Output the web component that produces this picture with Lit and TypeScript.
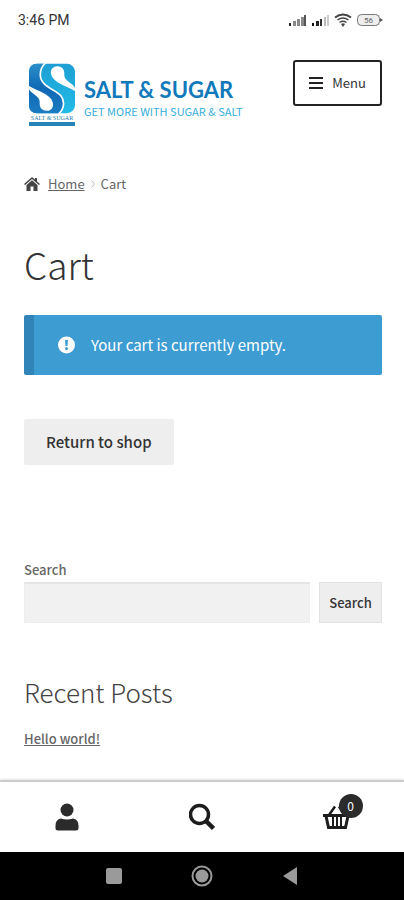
import { LitElement, html, css } from "lit";
import { customElement, property } from "lit/decorators.js";

@customElement("status-bar")
class StatusBar extends LitElement {
  static styles = css`
    :host {
      display: flex;
      justify-content: space-between;
      align-items: center;
      height: 40px;
      padding: 0 21px 0 18px;
      font: 400 14px/16px Roboto, "Liberation Sans", sans-serif;
      color: #333;
    }
    .icons {
      display: block;
    }
    .level {
      font: 8px Roboto, sans-serif;
      fill: #666;
    }
  `;
  render() {
    return html`
      <span>3:46 PM</span>
      <svg class="icons" width="95" height="16" viewBox="0 0 95 16" aria-hidden="true">
        <g fill="#555">
          <rect x="1" y="11" width="2" height="3" fill="#222" />
          <rect x="5" y="9" width="3" height="5" fill="#888" />
          <rect x="9" y="7" width="3" height="7" fill="#888" />
          <rect x="13" y="5" width="3" height="9" fill="#888" />
          <rect x="16" y="3" width="2" height="11" />
          <rect x="24" y="11" width="2" height="3" fill="#111" />
          <rect x="28" y="9" width="3" height="5" fill="#222" />
          <rect x="32" y="7" width="2" height="7" fill="#333" />
          <rect x="36" y="5" width="2" height="9" fill="#bbb" />
          <rect x="39" y="3" width="2" height="11" fill="#ccc" />
        </g>
        <g fill="none" stroke="#444" stroke-width="2">
          <path d="M47 5.5q8-6 16 0" />
          <path d="M49.500 8q5.500-4 11 0" stroke-width="1.500" />
          <path d="M51.500 10.500q3.500-2.500 7 0" stroke-width="1.500" />
        </g>
        <path d="M53 12q2-1.500 4 0l-2 3z" fill="#444" />
        <rect x="69.500" y="2.500" width="22" height="11" rx="4" fill="#eee" stroke="#777" />
        <path d="M92 6l3 2-3 2z" fill="#555" />
        <text class="level" x="80.500" y="11" text-anchor="middle">56</text>
      </svg>
    `;
  }
}

@customElement("site-header")
class SiteHeader extends LitElement {
  static styles = css`
    :host {
      display: flex;
      justify-content: space-between;
      align-items: flex-start;
      padding: 20px 22px 0 28px;
    }
    .logo {
      display: flex;
      gap: 8px;
      text-decoration: none;
      font-family: Lato, "Liberation Sans", sans-serif;
      white-space: nowrap;
    }
    .mark {
      display: flex;
      flex-direction: column;
      width: 48px;
      padding-top: 3px;
    }
    .caption {
      font: 6px/8px "Liberation Serif", serif;
      text-align: center;
      color: #2d7fae;
    }
    .bar {
      height: 4px;
      margin: 0 1px;
      background: #2584b8;
    }
    .words {
      display: flex;
      flex-direction: column;
      padding-top: 18px;
    }
    .name {
      font-size: 22px;
      line-height: 24px;
      font-weight: 700;
      color: #1279bb;
    }
    .tag {
      font: 11px/18px "Noto Sans CJK SC", "Noto Sans", sans-serif;
      color: #35aedb;
    }
    .menu {
      display: flex;
      align-items: center;
      justify-content: center;
      gap: 9px;
      box-sizing: border-box;
      width: 89px;
      height: 46px;
      padding: 0;
      border: 2px solid #222;
      border-radius: 3px;
      background: #fff;
      color: #333;
      font: 13px/20px "Noto Sans CJK SC", "Noto Sans", sans-serif;
    }
  `;
  render() {
    return html`
      <a class="logo" href="#home">
        <span class="mark">
          <svg width="48" height="51" viewBox="0 0 144 152" aria-hidden="true">
            <defs>
              <linearGradient id="deep" x1="0" y1="0" x2="0" y2="1">
                <stop offset="0" stop-color="#2a8fc9" />
                <stop offset="0.5" stop-color="#0f68b4" />
                <stop offset="1" stop-color="#1b7cc2" />
              </linearGradient>
              <linearGradient id="sky" x1="0" y1="0" x2="0" y2="1">
                <stop offset="0" stop-color="#1e9fd4" />
                <stop offset="1" stop-color="#22bce8" />
              </linearGradient>
            </defs>
            <rect x="3" y="2" width="138" height="148" rx="24" fill="url(#sky)" />
            <path
              d="M48 2H27Q3 2 3 26V126Q3 150 27 150H92C108 138 112 114 98 97C80 79 38 68 37 37C36 20 42 9 50 2Z"
              fill="url(#deep)"
            />
            <path
              d="M52 0C42 9 36 20 37 37C38 68 80 79 98 97C112 114 108 138 92 152"
              fill="none" stroke="#fff" stroke-width="5"
            />
            <g fill="#fff">
              <path d="M144 86C128 74 88 64 74 44C62 24 72 9 88 9C104 9 110 20 109 36C109 54 134 58 144 78Z" />
              <path d="M144 86C128 74 88 64 74 44C62 24 72 9 88 9C104 9 110 20 109 36C109 54 134 58 144 78Z" transform="rotate(180 72 76)" />
            </g>
          </svg>
          <span class="caption">SALT &amp; SUGAR</span>
          <span class="bar"></span>
        </span>
        <span class="words">
          <span class="name">SALT &amp; SUGAR</span>
          <span class="tag">GET MORE WITH SUGAR &amp; SALT</span>
        </span>
      </a>
      <button class="menu" type="button">
        <svg width="14" height="12" viewBox="0 0 14 12" aria-hidden="true">
          <path d="M0 1h14M0 6h14M0 11h14" stroke="#222" stroke-width="2" />
        </svg>
        Menu
      </button>
    `;
  }
}

@customElement("cart-page")
class CartPage extends LitElement {
  static styles = css`
    :host {
      display: block;
      padding: 0 22px 0 24px;
      color: #666;
      font: 13px/20px "Noto Sans CJK SC", "Noto Sans", sans-serif;
    }
    .crumbs {
      display: flex;
      align-items: center;
      gap: 6px;
      margin-top: 48px;
    }
    .crumbs a {
      margin-left: 2px;
    }
    a {
      color: inherit;
    }
    h1 {
      margin: 38px 0 0;
      font-size: 37px;
      line-height: 64px;
      font-weight: 300;
      color: #333;
    }
    .notice {
      display: flex;
      align-items: center;
      gap: 16px;
      height: 60px;
      margin-top: 19px;
      padding-left: 24px;
      border-left: 10px solid #3184b7;
      border-radius: 2px;
      background: #3d9cd2;
      color: #fff;
      font-size: 15px;
    }
    .return {
      display: block;
      height: 46px;
      margin-top: 44px;
      padding: 0 22px;
      border: 0;
      border-radius: 2px;
      background: #eee;
      color: #333;
      font: 500 15px/20px "Noto Sans CJK SC", "Noto Sans", sans-serif;
    }
    .search {
      display: grid;
      grid-template-columns: 1fr 63px;
      column-gap: 9px;
      margin-top: 95px;
    }
    label {
      grid-column: 1 / -1;
      padding-bottom: 2px;
      font-weight: 500;
    }
    input {
      min-width: 0;
      height: 41px;
      box-sizing: border-box;
      padding: 0 10px;
      border: 1px solid #eee;
      border-top: 2px solid #e4e4e4;
      background: #f1f1f1;
      font: inherit;
    }
    .go {
      height: 41px;
      box-sizing: border-box;
      padding: 0;
      border: 1px solid #e2e2e2;
      background: #eee;
      color: #333;
      font: inherit;
      font-weight: 500;
    }
    h2 {
      margin: 49px 0 0;
      font-size: 26px;
      line-height: 40px;
      font-weight: 300;
      color: #444;
    }
    .post {
      margin: 17px 0 0;
      font-weight: 500;
    }
  `;
  render() {
    return html`
      <nav class="crumbs" aria-label="Breadcrumb">
        <svg width="16" height="14" viewBox="0 0 16 14" aria-hidden="true">
          <path d="M8 0L0 7l1 1 7-6 7 6 1-1-3-2.600V1h-2v1.600z" fill="#444" />
          <path d="M8 3.200L2.500 8v6H6.500V9.500h3V14h4V8z" fill="#444" />
        </svg>
        <a href="#home">Home</a>
        <svg width="4" height="8" viewBox="0 0 4 8" aria-hidden="true">
          <path d="M0.500 0.500L3.500 4L0.500 7.500" fill="none" stroke="#bbb" />
        </svg>
        <span>Cart</span>
      </nav>
      <h1>Cart</h1>
      <div class="notice" role="status">
        <svg width="17" height="18" viewBox="0 0 17 18" aria-hidden="true">
          <circle cx="8.500" cy="9" r="8.500" fill="#fff" />
          <path d="M7 4h3l-.5 6h-2z" fill="#3d9cd2" />
          <circle cx="8.500" cy="12.500" r="1.500" fill="#3d9cd2" />
        </svg>
        <span>Your cart is currently empty.</span>
      </div>
      <button class="return" type="button">Return to shop</button>
      <form class="search" @submit=${(e: Event) => e.preventDefault()}>
        <label for="query">Search</label>
        <input id="query" type="search" />
        <button class="go" type="submit">Search</button>
      </form>
      <h2>Recent Posts</h2>
      <p class="post"><a href="#hello-world">Hello world!</a></p>
    `;
  }
}

@customElement("shop-bar")
class ShopBar extends LitElement {
  @property({ type: Number }) count = 0;
  static styles = css`
    :host {
      display: grid;
      grid-template-columns: repeat(3, 1fr);
      height: 70px;
      border-top: 2px solid #ccc;
      box-shadow: 0 0 3px #ccc;
      background: #fff;
    }
    a {
      display: flex;
      align-items: center;
      justify-content: center;
    }
    .basket {
      position: relative;
      display: flex;
    }
    .badge {
      position: absolute;
      left: 16px;
      top: -11px;
      width: 24px;
      height: 24px;
      border-radius: 50%;
      background: #2b2b2b;
      color: #fff;
      font: 12px/24px "Noto Sans CJK SC", "Noto Sans", sans-serif;
      text-align: center;
    }
  `;
  render() {
    return html`
      <a href="#account" aria-label="My account">
        <svg width="24" height="28" viewBox="0 0 24 28" aria-hidden="true">
          <circle cx="12" cy="7" r="6.500" fill="#2b2b2b" />
          <path d="M6 15.500Q12 17.500 18 15.500Q23.500 16 23.500 23V25Q23.500 27.500 21 27.500H3Q.5 27.500 .5 25V23Q.5 16 6 15.500Z" fill="#2b2b2b" />
        </svg>
      </a>
      <a href="#search" aria-label="Search">
        <svg width="26" height="28" viewBox="0 0 26 28" aria-hidden="true">
          <circle cx="10.500" cy="11.500" r="9" fill="none" stroke="#1c1c1c" stroke-width="3.500" />
          <path d="M17 18l7.500 7.500" stroke="#1c1c1c" stroke-width="4.500" />
        </svg>
      </a>
      <a href="#cart" aria-label="Cart">
        <span class="basket">
          <svg width="28" height="24" viewBox="0 0 28 24" aria-hidden="true">
            <g fill="none" stroke="#1c1c1c">
              <path d="M0 10.500h28" stroke-width="3" />
              <path d="M3 11l2.500 11.500h17L25 11" stroke-width="3" />
              <path d="M10 12v9M14 12v9M18 12v9" stroke-width="2" />
              <path d="M6 10l6-8.500M22 10l-6-8.500" stroke-width="2.500" />
            </g>
          </svg>
          <span class="badge">${this.count}</span>
        </span>
      </a>
    `;
  }
}

@customElement("system-nav")
class SystemNav extends LitElement {
  static styles = css`
    :host {
      display: flex;
      align-items: center;
      justify-content: center;
      gap: 66px;
      height: 48px;
      background: #000;
    }
    button {
      display: flex;
      justify-content: center;
      width: 22px;
      padding: 0;
      border: 0;
      background: none;
    }
  `;
  render() {
    return html`
      <button type="button" aria-label="Recent apps">
        <svg width="16" height="16"><rect width="16" height="16" rx="2" fill="#9a9a9a" /></svg>
      </button>
      <button type="button" aria-label="Home">
        <svg width="22" height="22">
          <circle cx="11" cy="11" r="9.500" fill="none" stroke="#9a9a9a" stroke-width="2" />
          <circle cx="11" cy="11" r="6.500" fill="#9a9a9a" />
        </svg>
      </button>
      <button type="button" aria-label="Back">
        <svg width="14" height="18"><path d="M0 9L14 0V18Z" fill="#9a9a9a" /></svg>
      </button>
    `;
  }
}

@customElement("app-root")
class AppRoot extends LitElement {
  static styles = css`
    :host {
      display: flex;
      flex-direction: column;
      min-height: 100vh;
      background: #fff;
    }
    cart-page {
      flex: 1;
    }
  `;
  render() {
    return html`
      <status-bar></status-bar>
      <site-header></site-header>
      <cart-page></cart-page>
      <shop-bar .count=${0}></shop-bar>
      <system-nav></system-nav>
    `;
  }
}
